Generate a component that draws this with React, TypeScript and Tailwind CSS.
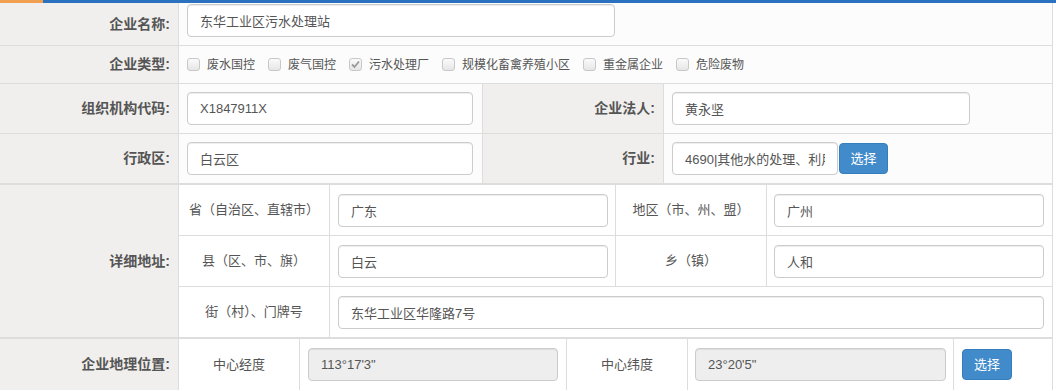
const FONT = "font-['Liberation_Sans','Noto_Sans_CJK_SC',sans-serif]";

const Input = ({ value, w, disabled }: { value: string; w: string; disabled?: boolean }) => (
  <input
    readOnly
    value={value}
    className={`${w} h-[33px] px-3 text-[13px] text-[#555] border border-[#ccc] rounded-[4px] shadow-[inset_0_1px_1px_rgba(0,0,0,0.075)] outline-none ${
      disabled ? "bg-[#eeeeee]" : "bg-white"
    }`}
  />
);

const Btn = ({ cls }: { cls: string }) => (
  <button className={`${cls} bg-[#428bca] border border-[#357ebd] rounded-[4px] text-white text-[13px] flex items-center justify-center`}>
    选择
  </button>
);

const Label = ({ text, cls = "w-[179px]" }: { text: string; cls?: string }) => (
  <div className={`${cls} shrink-0 bg-[#f0efed] border-r border-[#ddd] flex items-center justify-end pr-[8px] text-[14px] font-bold text-[#555]`}>
    {text}
  </div>
);

const Check = ({ label, checked }: { label: string; checked?: boolean }) => (
  <div className="flex items-center mr-[13px]">
    <span className="w-[13px] h-[13px] rounded-[3px] border border-[#c8c8c8] bg-gradient-to-b from-[#fafafa] to-[#e6e6e6] flex items-center justify-center">
      {checked && (
        <svg width="9" height="9" viewBox="0 0 9 9">
          <path d="M1 4.5 L3.5 7 L8 1.5" stroke="#999" strokeWidth="1.8" fill="none" />
        </svg>
      )}
    </span>
    <span className="ml-[7px] text-[12px] text-[#555]">{label}</span>
  </div>
);

const SubLabel = ({ text, cls }: { text: string; cls: string }) => (
  <div className={`${cls} shrink-0 border-r border-[#ddd] flex items-center justify-center text-[13px] text-[#555]`}>
    {text}
  </div>
);

export default function App() {
  return (
    <div className={`w-[1056px] h-[391px] overflow-hidden bg-white ${FONT}`}>
      <div className="flex h-[3px]">
        <div className="w-[43px] bg-[#f0a050]" />
        <div className="flex-1 bg-[#2a72c0]" />
      </div>
      <div className="w-[1053px] border-r border-[#ddd] bg-[#fcfcfc]">
        {/* 企业名称 */}
        <div className="flex h-[43px] border-b border-[#ddd]">
          <Label text="企业名称:" />
          <div className="flex-1 pl-[8px] pt-[1px]">
            <Input value="东华工业区污水处理站" w="w-[428px]" />
          </div>
        </div>

        {/* 企业类型 */}
        <div className="flex h-[38px] border-b border-[#ddd]">
          <Label text="企业类型:" />
          <div className="flex-1 pl-[8px] flex items-center">
            <Check label="废水国控" />
            <Check label="废气国控" />
            <Check label="污水处理厂" checked />
            <Check label="规模化畜禽养殖小区" />
            <Check label="重金属企业" />
            <Check label="危险废物" />
          </div>
        </div>

        {/* 组织机构代码 / 企业法人 */}
        <div className="flex h-[50px] border-b border-[#ddd]">
          <Label text="组织机构代码:" />
          <div className="w-[304px] shrink-0 border-r border-[#ddd] pl-[8px] flex items-center">
            <Input value="X1847911X" w="w-[286px]" />
          </div>
          <Label text="企业法人:" cls="w-[181px]" />
          <div className="flex-1 pl-[8px] flex items-center">
            <Input value="黄永坚" w="w-[298px]" />
          </div>
        </div>

        {/* 行政区 / 行业 */}
        <div className="flex h-[51px] border-b-2 border-[#ddd]">
          <Label text="行政区:" />
          <div className="w-[304px] shrink-0 border-r border-[#ddd] pl-[8px] flex items-center">
            <Input value="白云区" w="w-[286px]" />
          </div>
          <Label text="行业:" cls="w-[181px]" />
          <div className="flex-1 pl-[8px] flex items-center gap-[1px]">
            <Input value="4690|其他水的处理、利用与分配" w="w-[166px]" />
            <Btn cls="w-[49px] h-[31px]" />
          </div>
        </div>

        {/* 详细地址 */}
        <div className="flex h-[154px] border-b-2 border-[#ddd]">
          <Label text="详细地址:" />
          <div className="flex-1 flex flex-col bg-white">
            <div className="flex h-[51px] border-b border-[#ddd]">
              <SubLabel text="省（自治区、直辖市）" cls="w-[151px]" />
              <div className="w-[286px] shrink-0 border-r border-[#ddd] pl-[8px] flex items-center">
                <Input value="广东" w="w-[270px]" />
              </div>
              <SubLabel text="地区（市、州、盟）" cls="w-[151px]" />
              <div className="flex-1 pl-[7px] flex items-center">
                <Input value="广州" w="w-[270px]" />
              </div>
            </div>
            <div className="flex h-[51px] border-b border-[#ddd]">
              <SubLabel text="县（区、市、旗）" cls="w-[151px]" />
              <div className="w-[286px] shrink-0 border-r border-[#ddd] pl-[8px] flex items-center">
                <Input value="白云" w="w-[270px]" />
              </div>
              <SubLabel text="乡（镇）" cls="w-[151px]" />
              <div className="flex-1 pl-[7px] flex items-center">
                <Input value="人和" w="w-[270px]" />
              </div>
            </div>
            <div className="flex h-[50px]">
              <SubLabel text="街（村）、门牌号" cls="w-[151px]" />
              <div className="flex-1 pl-[8px] flex items-center">
                <Input value="东华工业区华隆路7号" w="w-[706px]" />
              </div>
            </div>
          </div>
        </div>

        {/* 企业地理位置 */}
        <div className="flex h-[51px]">
          <Label text="企业地理位置:" />
          <div className="flex-1 flex bg-white">
            <SubLabel text="中心经度" cls="w-[121px]" />
            <div className="w-[267px] shrink-0 border-r border-[#ddd] pl-[8px] flex items-center">
              <Input value={"113°17'3\""} w="w-[250px]" disabled />
            </div>
            <SubLabel text="中心纬度" cls="w-[121px]" />
            <div className="w-[266px] shrink-0 border-r border-[#ddd] pl-[7px] flex items-center">
              <Input value={"23°20'5\""} w="w-[251px]" disabled />
            </div>
            <div className="flex-1 pl-[8px] flex items-center">
              <Btn cls="w-[50px] h-[31px]" />
            </div>
          </div>
        </div>
      </div>
    </div>
  );
}
